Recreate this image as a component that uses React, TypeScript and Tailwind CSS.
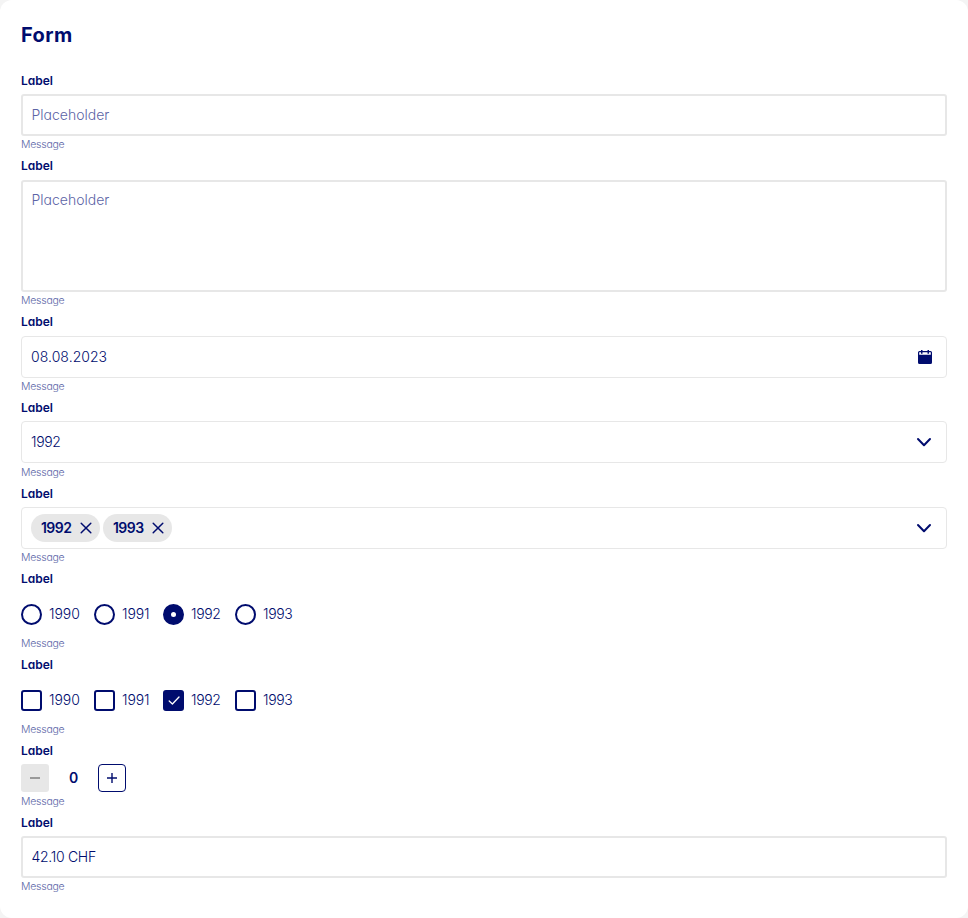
import type { ReactNode } from 'react';

type FieldProps = { labelClass?: string; messageClass?: string; children: ReactNode };

function Field({ labelClass = 'h-7', messageClass = 'h-4', children }: FieldProps) {
  return (
    <div className="flex flex-col">
      <div className={`flex items-center text-[12px] font-semibold ${labelClass}`}>Label</div>
      {children}
      <div className={`flex items-center pt-[2px] text-[10.5px] font-light tracking-[-0.25px] text-[#6068a8] ${messageClass}`}>Message</div>
    </div>
  );
}

function Chevron() {
  return (
    <svg className="mr-[14px] h-4 w-4" viewBox="0 0 16 16" fill="none" stroke="#000c6e" strokeWidth="2" strokeLinecap="round" strokeLinejoin="round">
      <path d="M2 5 8 11.2 14 5" />
    </svg>
  );
}

function Chip({ text }: { text: string }) {
  return (
    <span className="flex h-7 w-[69px] items-center justify-between rounded-full bg-[#e7e7e7] pr-[8.5px] pl-[10px] text-[14px] font-semibold tracking-[-0.55px]">
      <span className="pb-px">{text}</span>
      <svg className="h-3 w-3" viewBox="0 0 12 12" fill="none" stroke="#000c6e" strokeWidth="1.5" strokeLinecap="round">
        <path d="M1.2 1.2 10.8 10.8M10.8 1.2 1.2 10.8" />
      </svg>
    </span>
  );
}

const options = [
  { year: '1990', width: 'w-[73px]', tracking: 'tracking-[-0.05px]' },
  { year: '1991', width: 'w-[69px]', tracking: 'tracking-[-0.1px]' },
  { year: '1992', width: 'w-[72px]', tracking: 'tracking-[-0.35px]' },
  { year: '1993', width: 'w-[72px]', tracking: 'tracking-[-0.35px]' },
];

function Options({ kind }: { kind: 'radio' | 'checkbox' }) {
  return (
    <div className="flex h-[43px] items-center pt-[2px]">
      {options.map(({ year, width, tracking }) => {
        const on = year === '1992';
        const shape = kind === 'radio' ? 'rounded-full' : 'rounded-[3px]';
        return (
          <div key={year} className={`flex items-center gap-[7px] text-[14px] font-light ${tracking} ${width}`}>
            <span className={`flex h-[21px] w-[21px] shrink-0 items-center justify-center border-2 border-[#000c6e] ${shape} ${on ? 'bg-[#000c6e]' : ''}`}>
              {on && kind === 'radio' && <span className="h-[5px] w-[5px] rounded-full bg-white" />}
              {on && kind === 'checkbox' && (
                <svg className="h-3 w-3 shrink-0" viewBox="0 0 12 12" fill="none" stroke="white" strokeWidth="1.3" strokeLinecap="round" strokeLinejoin="round">
                  <path d="M1.2 6 4.4 9 11 2" />
                </svg>
              )}
            </span>
            <span className="pb-[2px]">{year}</span>
          </div>
        );
      })}
    </div>
  );
}

const thin = 'flex h-[42px] items-center rounded-[4px] border border-[#e7e7e7] pl-[9px] text-[14px] font-light';
const thick = 'flex rounded-[3px] border-2 border-[#e7e7e7] pl-[8.5px] text-[14px] font-light';

export default function App() {
  return (
    <div className="bg-[#f4f4f4]">
      <main className="h-[918px] w-[968px] rounded-[12px] bg-white px-[21px] font-[Inter,sans-serif] text-[#000c6e] [font-feature-settings:'cv11']">
        <h1 className="flex h-[66px] items-center pt-[3px] text-[20px] font-bold tracking-[0.4px]">Form</h1>
        <Field labelClass="h-7 pt-px">
          <div className={`${thick} h-[42px] items-center pb-[2px] text-[#5c64a6]`}>Placeholder</div>
        </Field>
        <Field>
          <div className={`${thick} h-28 items-start pt-[8px] leading-5 text-[#5c64a6]`}>Placeholder</div>
        </Field>
        <Field>
          <div className={`${thin} justify-between`}>
            <span className="pb-px tracking-[0.05px]">08.08.2023</span>
            <svg className="mr-[14px] h-[14px] w-[14px]" viewBox="0 0 14 14" fill="#000c6e">
              <path fillRule="evenodd" d="M3 0h1.5v1h5V0H11v1h1.5Q14 1 14 2.5v10Q14 14 12.5 14h-11Q0 14 0 12.5v-10Q0 1 1.5 1H3ZM1.2 2.2V4.8h11.6V2.2H11V3.8H9.5V2.2h-5V3.8H3V2.2Z" />
            </svg>
          </div>
        </Field>
        <Field labelClass="h-[27px]" messageClass="h-[17px]">
          <div className={`${thin} justify-between`}><span className="pb-px tracking-[-0.35px]">1992</span><Chevron /></div>
        </Field>
        <Field labelClass="h-[27px]">
          <div className={`${thin} justify-between`}>
            <div className="flex gap-[3px]"><Chip text="1992" /><Chip text="1993" /></div>
            <Chevron />
          </div>
        </Field>
        <Field labelClass="h-[27px]"><Options kind="radio" /></Field>
        <Field labelClass="h-[27px]"><Options kind="checkbox" /></Field>
        <Field labelClass="h-[27px]" messageClass="h-[17px]">
          <div className="flex h-7 items-center">
            <span className="flex h-7 w-7 items-center justify-center rounded-[3px] bg-[#e7e7e7]">
              <svg className="h-3 w-3" viewBox="0 0 12 12" stroke="#777777" strokeWidth="1.4">
                <path d="M1 6h10" />
              </svg>
            </span>
            <span className="w-[49px] pb-px text-center text-[14px] font-semibold">0</span>
            <span className="flex h-7 w-7 items-center justify-center rounded-[4px] border border-[#000c6e]">
              <svg className="h-3 w-3" viewBox="0 0 12 12" stroke="#000c6e" strokeWidth="1.4">
                <path d="M6 1v10M1 6h10" />
              </svg>
            </span>
          </div>
        </Field>
        <Field labelClass="h-[27px]">
          <div className={`${thick} h-[42px] items-center pb-[2px] tracking-[-0.3px]`}>42.10 CHF</div>
        </Field>
      </main>
    </div>
  );
}
